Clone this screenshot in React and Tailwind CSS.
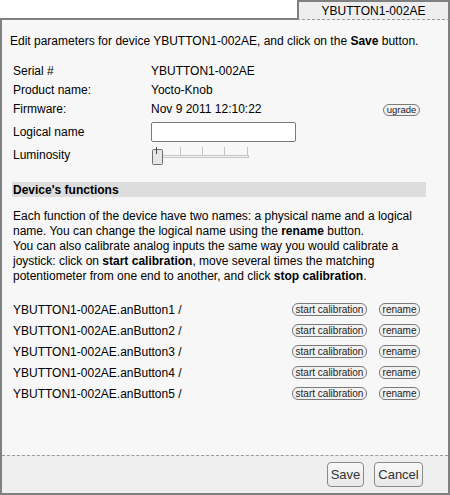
import React from "react";

function Slider() {
  return (
    <svg width="100" height="20" viewBox="0 0 100 20" className="block">
      <rect x="1.5" y="9.5" width="96" height="2" fill="#f4f4f4" stroke="#c4c4c4" strokeWidth="1" />
      {[29, 51, 73, 96].map((x) => (
        <line key={x} x1={x + 0.5} y1="1" x2={x + 0.5} y2="10" stroke="#c4c4c4" strokeWidth="1" />
      ))}
      <rect x="1.5" y="3.5" width="10" height="15" rx="1" fill="#e6e6e6" stroke="#6e6e6e" strokeWidth="1" />
      <line x1="5.5" y1="1" x2="5.5" y2="8" stroke="#444" strokeWidth="1" />
    </svg>
  );
}

function SmallBtn({ children, w }) {
  return (
    <span
      className={`inline-flex items-center justify-center h-[13px] ${w} rounded-[6px] border border-[#7a7a7a] bg-[#f2f2f2] text-[10px] leading-none text-[#222]`}
    >
      {children}
    </span>
  );
}

export default function App() {
  const rows = [1, 2, 3, 4, 5];
  return (
    <div
      className="w-[450px] h-[495px] flex flex-col bg-white text-[12px] text-black"
      style={{ fontFamily: '"Liberation Sans", Arial, sans-serif' }}
    >
      <div className="h-[20px] flex">
        <div className="flex-1 border-b-2 border-[#808080]" />
        <div
          className="w-[153px] border-t-2 border-l-2 border-r-2 border-[#808080] bg-[#eeeeee] border-b border-b-[#9a9a9a] flex items-center justify-center leading-none"
          style={{ borderBottomStyle: "dashed" }}
        >
          YBUTTON1-002AE
        </div>
      </div>

      <div className="flex-1 flex flex-col border-l-2 border-r-2 border-b-2 border-[#808080] bg-[#f7f7f7]">
        <div className="flex-1 px-[8px]">
          <div className="pt-[14px] leading-[15px]">
            Edit parameters for device YBUTTON1-002AE, and click on the <b>Save</b> button.
          </div>

          <div className="mt-[12px] pl-[3px]">
            <div className="h-[19px] flex items-center">
              <span className="w-[138px]">Serial #</span>
              <span>YBUTTON1-002AE</span>
            </div>
            <div className="h-[19px] flex items-center">
              <span className="w-[138px]">Product name:</span>
              <span>Yocto-Knob</span>
            </div>
            <div className="h-[19px] flex items-center">
              <span className="w-[138px]">Firmware:</span>
              <span className="flex-1">Nov 9 2011 12:10:22</span>
              <span className="mr-[20px] mt-[2px] inline-flex items-center justify-center h-[12px] w-[37px] rounded-[6px] border border-[#7a7a7a] bg-[#f2f2f2] text-[9.5px] leading-none text-[#222]">
                ugrade
              </span>
            </div>
            <div className="mt-[2px] h-[24px] flex items-center">
              <span className="w-[138px]">Logical name</span>
              <span className="block w-[145px] h-[20px] border border-[#7a7a7a] rounded-[2px] bg-white" />
            </div>
            <div className="h-[22px] flex items-center">
              <span className="w-[138px]">Luminosity</span>
              <span className="mt-[2px]"><Slider /></span>
            </div>
          </div>

          <div className="mt-[16px] mx-[2px] w-[414px] h-[15px] bg-[#dddddd] flex items-center pl-[1px] font-bold leading-none">
            Device's functions
          </div>

          <div className="mt-[12px] pl-[3px] leading-[15px] whitespace-nowrap">
            <div>Each function of the device have two names: a physical name and a logical</div>
            <div>name. You can change the logical name using the <b>rename</b> button.</div>
            <div>You can also calibrate analog inputs the same way you would calibrate a</div>
            <div>joystick: click on <b>start calibration</b>, move several times the matching</div>
            <div>potentiometer from one end to another, and click <b>stop calibration</b>.</div>
          </div>

          <div className="mt-[15px] pl-[3px]">
            {rows.map((n) => (
              <div key={n} className="h-[21px] flex items-center">
                <span className="flex-1">YBUTTON1-002AE.anButton{n} /</span>
                <SmallBtn w="w-[75px]">start calibration</SmallBtn>
                <span className="w-[12px]" />
                <SmallBtn w="w-[41px]">rename</SmallBtn>
                <span className="w-[20px]" />
              </div>
            ))}
          </div>
        </div>

        <div className="h-[38px] border-t border-dashed border-[#9a9a9a] bg-[#efefef] flex justify-end items-start pt-[6px] pr-[25px] gap-[10px]">
          <button className="h-[25px] w-[37px] rounded-[4px] border border-[#8a8a8a] bg-gradient-to-b from-[#f8f8f8] to-[#e8e8e8] text-[13px] text-[#333] leading-none">
            Save
          </button>
          <button className="h-[25px] w-[49px] rounded-[4px] border border-[#8a8a8a] bg-gradient-to-b from-[#f8f8f8] to-[#e8e8e8] text-[13px] text-[#333] leading-none">
            Cancel
          </button>
        </div>
      </div>
    </div>
  );
}
